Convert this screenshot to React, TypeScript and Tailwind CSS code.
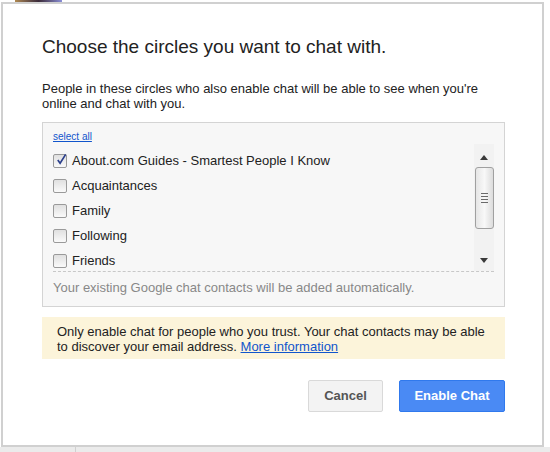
import React from "react";

const circles = [
  { name: "About.com Guides - Smartest People I Know", checked: true },
  { name: "Acquaintances", checked: false },
  { name: "Family", checked: false },
  { name: "Following", checked: false },
  { name: "Friends", checked: false },
];

function Checkbox({ checked }: { checked: boolean }) {
  return (
    <span className="relative w-[14px] h-[14px] shrink-0 border border-[#9a9a9a] rounded-[2px] bg-gradient-to-b from-[#e0e0e0] to-[#fafafa]">
      {checked && (
        <svg
          viewBox="0 0 14 14"
          className="absolute left-[1px] top-[-2px] w-[13px] h-[13px]"
        >
          <path
            d="M3 7.5 L5.5 11 L11.5 1.5"
            fill="none"
            stroke="#2b3f8c"
            strokeWidth="1.8"
          />
        </svg>
      )}
    </span>
  );
}

function Scrollbar() {
  return (
    <div className="absolute right-0 top-0 w-[20px] h-full bg-[#f2f2f2] flex flex-col items-center">
      <svg viewBox="0 0 8 5" className="w-[8px] h-[5px] mt-[11px]">
        <path d="M0 5 L4 0 L8 5 Z" fill="#3a3a3a" />
      </svg>
      <div className="mt-[7px] w-[19px] h-[62px] rounded-[3px] border border-[#a0a0a0] bg-gradient-to-r from-[#e6e6e6] via-[#f8f8f8] to-[#dcdcdc] flex flex-col items-center justify-center gap-[2px]">
        <span className="w-[7px] h-px bg-[#6a6a6a]" />
        <span className="w-[7px] h-px bg-[#6a6a6a]" />
        <span className="w-[7px] h-px bg-[#6a6a6a]" />
        <span className="w-[7px] h-px bg-[#6a6a6a]" />
      </div>
      <svg viewBox="0 0 8 5" className="w-[8px] h-[5px] mt-[29px]">
        <path d="M0 0 L8 0 L4 5 Z" fill="#3a3a3a" />
      </svg>
    </div>
  );
}

export default function App() {
  return (
    <div className="relative w-[550px] h-[452px] bg-white overflow-hidden font-['Liberation_Sans',Arial,sans-serif]">
      {/* bit of the page behind the dialog */}
      <div className="absolute left-[15px] top-0 w-[47px] h-[2px] bg-gradient-to-r from-[#b0894f] via-[#3b2b3a] to-[#8a8fd8]" />

      <div className="ml-[1px] mt-[2px] w-[543px] h-[445px] border-2 border-[#d0d0d0] bg-white pl-[39px] pt-[31px]">
        <h1 className="text-[19px] leading-[24px] text-[#222]">
          Choose the circles you want to chat with.
        </h1>

        <p className="mt-[22px] w-[470px] text-[13px] leading-[15px] text-[#222]">
          People in these circles who also enable chat will be able to see
          when you're online and chat with you.
        </p>

        {/* circle list */}
        <div className="mt-[11px] w-[463px] h-[185px] border border-[#d4d4d4] bg-[#f7f7f7] px-[10px]">
          <div className="pt-[8px] h-[21px]">
            <a className="block text-[10px] leading-[12px] text-[#1155cc] underline">
              select all
            </a>
          </div>
          <div className="relative h-[128px] overflow-hidden border-b border-dashed border-[#c8c8c8]">
            <div className="pt-[4px]">
              {circles.map((c) => (
                <div key={c.name} className="h-[25px] flex items-center gap-[5px]">
                  <Checkbox checked={c.checked} />
                  <span className="text-[13px] text-[#222]">{c.name}</span>
                </div>
              ))}
            </div>
            <Scrollbar />
          </div>
          <p className="pt-[8px] text-[13px] leading-[15px] text-[#888]">
            Your existing Google chat contacts will be added automatically.
          </p>
        </div>

        {/* notice */}
        <div className="mt-[10px] w-[463px] h-[42px] bg-[#fcf4da] pl-[15px] pr-[12px] pt-[7px] text-[13px] leading-[15px] text-[#222]">
          <p>
            Only enable chat for people who you trust. Your chat contacts may
            be able to discover your email address.{" "}
            <a className="text-[#1155cc] underline">More information</a>
          </p>
        </div>

        {/* buttons */}
        <div className="mt-[21px] w-[463px] flex justify-end gap-[16px]">
          <button className="w-[75px] h-[32px] rounded-[2px] border border-[#d9d9d9] bg-[#f3f3f3] text-[13px] font-bold text-[#555]">
            Cancel
          </button>
          <button className="w-[106px] h-[32px] rounded-[2px] border border-[#3079ed] bg-[#4a8af4] text-[13px] font-bold text-white">
            Enable Chat
          </button>
        </div>
      </div>

      <div className="relative h-[5px] bg-[#ebebeb]">
        <div className="absolute left-[75px] top-0 w-px h-full bg-[#d0d0d0]" />
      </div>
    </div>
  );
}
